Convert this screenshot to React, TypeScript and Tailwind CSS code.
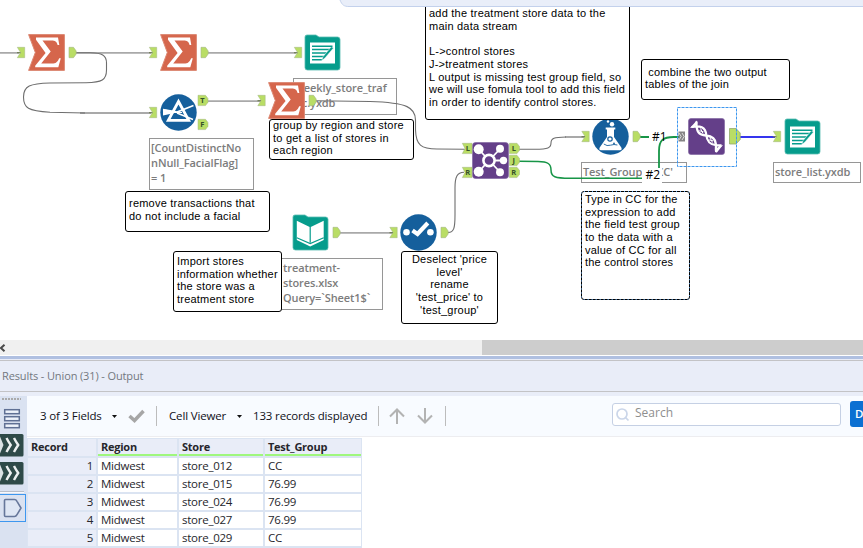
import type { ReactNode } from "react";

const NOTE_FONT = "font-['Liberation_Sans',Arial,sans-serif] text-[11px] leading-[12.65px] tracking-[0.22px] text-black";
const UI_FONT = "font-['Open_Sans','Noto_Sans',sans-serif]";

function Note({ className, lines }: { className: string; lines: string[] }) {
  return (
    <div className={`absolute whitespace-pre rounded-[3px] border border-black bg-white ${NOTE_FONT} ${className}`}>
      {lines.map((line, i) => (
        <div key={i} className="min-h-[12.65px]">{line}</div>
      ))}
    </div>
  );
}

function Caption({ className, lines }: { className: string; lines: string[] }) {
  return (
    <div className={`absolute whitespace-pre border border-[#969696] bg-white pl-px pt-px text-[11px] font-semibold leading-[15px] tracking-[-0.1px] text-[#7c7c7c] ${UI_FONT} ${className}`}>
      {lines.map((line) => (
        <div key={line}>{line}</div>
      ))}
    </div>
  );
}

function Tool({ className, children }: { className: string; children: ReactNode }) {
  return (
    <svg viewBox="0 0 37 37" className={`absolute size-[37px] ${className}`}>
      {children}
    </svg>
  );
}

function Summarize({ className }: { className: string }) {
  return (
    <Tool className={className}>
      <path d="M.6.6H36.4V36.4H.6L7.3 18.5Z" fill="#d5664c" stroke="#dc8873" strokeWidth="1" />
      <path
        d="M8 3.6H30L31.3 11H29.6C28.6 7.4 27.2 6.5 23.5 6.5H14.5L22.7 17.5L13.2 29.5H24C28 29.5 29.5 28 31.2 24.2H32.8L30.3 33.3H7.2V31.8L17.6 19L8 5.8Z"
        fill="#fff"
      />
    </Tool>
  );
}

function OutputData({ className }: { className: string }) {
  return (
    <Tool className={className}>
      <path d="M1 3Q1 1 3 1H12L15 3H33.5Q36 3 36 5.5V33.5Q36 36 33.5 36H3.5Q1 36 1 33.5Z" fill="#069c8c" stroke="#59bcb1" strokeWidth=".8" />
      <path d="M6 8.5H31V29.5H6Z" fill="#fff" />
      <path d="M8 12.2H28.5M8 15.6H26.5M8 19H24M8 22.4H20.5M8 25.8H18" stroke="#069c8c" strokeWidth="1.5" />
      <path d="M29.5 14L21 24L17.7 26.6L19 22.7L27 13" fill="#069c8c" stroke="#fff" strokeWidth=".5" />
    </Tool>
  );
}

function InputData({ className }: { className: string }) {
  return (
    <Tool className={className}>
      <path d="M1 3Q1 1 3 1H13L16 3H33.5Q36 3 36 5.5V33.5Q36 36 33.5 36H3.5Q1 36 1 33.5Z" fill="#069c8c" stroke="#59bcb1" strokeWidth=".8" />
      <path d="M4.8 6.7L18.2 13.2L31.7 6.7V26L18.2 32.4L4.8 26Z" fill="#fff" />
      <path d="M18.2 13V28.5M4.8 23.8L18.2 29.6L31.7 23.8" fill="none" stroke="#069c8c" strokeWidth="1.2" />
    </Tool>
  );
}

function Filter({ className }: { className: string }) {
  return (
    <Tool className={className}>
      <circle cx="18.5" cy="18.5" r="18.2" fill="#155f9c" />
      <path d="M3 15.5L17 18L33.5 11.5M17 19L33 25.5" fill="none" stroke="#fff" strokeWidth="1.7" />
      <path d="M3 15L18 18.3L3 21.5Z" fill="#fff" />
      <path d="M18.5 7.5L28.7 26.3H8.3Z" fill="none" stroke="#fff" strokeWidth="2.8" />
      <path d="M14 18.5H22" stroke="#fff" strokeWidth="1" />
    </Tool>
  );
}

function Select({ className }: { className: string }) {
  return (
    <Tool className={className}>
      <circle cx="18.5" cy="18.5" r="18.2" fill="#155f9c" />
      <circle cx="6.5" cy="18.3" r="3.3" fill="#fff" />
      <circle cx="30.4" cy="18.3" r="3.3" fill="#fff" />
      <path d="M12.5 16.5L17.5 20L27.8 9" fill="none" stroke="#fff" strokeWidth="4.1" />
    </Tool>
  );
}

function Join({ className }: { className: string }) {
  return (
    <Tool className={className}>
      <rect x=".5" y=".5" width="36" height="36" rx="3" fill="#643f89" stroke="#8469a2" strokeWidth=".7" />
      <path d="M6.5 7L17 18.5L28 7M6.5 30L17 18.5L28 30M17 18.5H31" stroke="#fff" strokeWidth="1.8" fill="none" />
      <circle cx="6.7" cy="7.3" r="5" fill="#fff" />
      <circle cx="6.7" cy="29.8" r="5" fill="#fff" />
      <circle cx="28" cy="6.8" r="4" fill="#fff" />
      <circle cx="28" cy="30.2" r="4" fill="#fff" />
      <circle cx="31.5" cy="18.5" r="3.7" fill="#fff" />
      <circle cx="17" cy="18.5" r="5.6" fill="#643f89" stroke="#fff" strokeWidth="2.6" />
    </Tool>
  );
}

function Formula({ className }: { className: string }) {
  return (
    <Tool className={className}>
      <circle cx="18.5" cy="18.5" r="18.2" fill="#155f9c" />
      <path d="M13.7 9.5H23.3V11.5H22V19L29.3 29.5Q30.5 32.3 28 32.3H9Q6.5 32.3 7.7 29.5L15 19V11.5H13.7Z" fill="#fff" />
      <circle cx="18" cy="21" r="2.2" fill="#fff" stroke="#155f9c" strokeWidth="1.2" />
      <circle cx="22" cy="25.5" r=".9" fill="#155f9c" />
      <path d="M11.8 26Q15 28.5 18.5 27.2T25.4 27" fill="none" stroke="#155f9c" strokeWidth=".9" />
      <circle cx="20" cy="6.2" r="2.2" fill="#fff" />
      <circle cx="16" cy="3.5" r="1.2" fill="#fff" />
    </Tool>
  );
}

function Union({ className }: { className: string }) {
  return (
    <Tool className={className}>
      <rect x=".5" y=".5" width="36" height="36" rx="2.5" fill="#643f89" stroke="#8469a2" strokeWidth=".7" />
      <path
        d="M8.5 3.5C8 14 11 17 18 17.500C24.500 18 27.500 20.500 28 26.500C28.200 29 27.500 31 28.200 34M3.500 9C12 7 17.500 9 18.300 17C19 24 22 26.500 28 27.200L33.500 27.500"
        fill="none"
        stroke="#fff"
        strokeWidth="2.3"
      />
      <path d="M11.300 12.700L15.500 13.800M12.500 10.500L15 15.500M20.500 21.800L25 22.800M21.800 19.500L24.500 24.500" stroke="#fff" strokeWidth="1" />
      <path d="M2 10L8.700 2.500L9.300 5.500L6 9.500ZM35 27L28.500 35L27.600 31.500L31 28Z" fill="#fff" />
    </Tool>
  );
}

const IN_ANCHORS = [
  [17, 47], [149, 47], [294, 47], [149, 107], [257.5, 95], [389.5, 227], [581.5, 131], [773, 131],
];
const OUT_ANCHORS = [
  [69, 47], [201, 47], [309, 95], [333, 227], [441, 227], [633, 131],
];

function Wires() {
  return (
    <svg viewBox="0 0 863 340" className="absolute inset-0 h-[340px] w-[863px]" fill="none">
      <g stroke="#a9a9a9" strokeWidth="1.8">
        <path d="M0 52.8H19M76 52.8H151M208 52.8H296M80 113H151M208 101.2H260M340 232.8H392M565 137H584" />
      </g>
      <g stroke="#6e6e6e" strokeWidth="1.1">
        <path d="M76 52.8H90C102 53 106.500 55 106.500 63V70C106.500 80 102 82.500 86 82.700L50 83C30 83.500 23.500 86 23.500 97C23.500 108 28 111 50 112.200L85 113" />
        <path d="M316 100.800L370 101.500C408 102.500 415.500 108 415.500 120V130C416 145 421 149 437 149L465 149.300" />
        <path d="M448 232.500C454 232.500 455 228 455 215V188C455 177 457 172.500 464 172.300" />
        <path d="M519 149.300H535C548 149 551 148 551 143C551 138 554 137.300 566 137" />
      </g>
      <g stroke="#179547" strokeWidth="1.5">
        <path d="M519 161.200L538 161.500C548 161.500 551 164 551 170C551 177 555 178.200 570 178.300H642" />
        <path d="M640 137H649M659 168V151C659 140 663 137 674 137H681" strokeWidth="1.8" />
      </g>
      <path d="M740 137H775" stroke="#3535ee" strokeWidth="2" />
    </svg>
  );
}

function Anchors() {
  return (
    <svg viewBox="0 0 863 340" className={`absolute inset-0 h-[340px] w-[863px] ${UI_FONT}`}>
      {IN_ANCHORS.map(([x, y]) => (
        <g key={`${x}-${y}`} transform={`translate(${x} ${y})`}>
          <path d="M.3.3H7.7V10.700H.3L3.500 5.500Z" fill="#b9dd65" stroke="#a2b584" strokeWidth=".5" />
          <path d="M0 5.700H3.500" stroke="#6f7c55" strokeWidth="1.200" />
        </g>
      ))}
      {OUT_ANCHORS.map(([x, y]) => (
        <path key={`${x}-${y}`} transform={`translate(${x} ${y})`} d="M0 .3H4.500L7.200 4V7L4.500 10.700H0Z" fill="#b9dd65" stroke="#a2b584" strokeWidth=".6" />
      ))}
      <path d="M729.500 128.500H736L740.200 133V139.500L736 144H729.500Z" fill="#b9dd65" stroke="#94a970" strokeWidth=".8" />
      {[[198, 95, "T"], [198, 119, "F"], [509.5, 143, "L"], [509.5, 155, "J"], [509.5, 167, "R"]].map(([x, y, t]) => (
        <g key={`${x}-${y}`} transform={`translate(${x} ${y})`}>
          <path d="M0 .3H7.500L10 3.500V7.300L7.500 10.600H0Z" fill="#b9dd65" stroke="#a2b584" strokeWidth=".5" />
          <text x="4.300" y="8.200" textAnchor="middle" fontSize="7.500" fontWeight="700" fill="#35512a">{t}</text>
        </g>
      ))}
      {[[462, 143, "L"], [462, 167, "R"]].map(([x, y, t]) => (
        <g key={`${x}-${y}`} transform={`translate(${x} ${y})`}>
          <path d="M.3.3H10V10.600H.3L3 5.500Z" fill="#b9dd65" stroke="#a2b584" strokeWidth=".5" />
          <text x="5.800" y="8.200" textAnchor="middle" fontSize="7.500" fontWeight="700" fill="#35512a">{t}</text>
        </g>
      ))}
      <path d="M678.500 131.500H685V141.500H678.500Z" fill="#858585" />
      <path d="M679 133L681.200 136.500L679 140M682 133L684.200 136.500L682 140" stroke="#e5e5e5" strokeWidth=".9" fill="none" />
    </svg>
  );
}

function Workflow() {
  return (
    <section className="relative h-[340px] w-full shrink-0 overflow-hidden bg-white">
      <Caption className="left-[293px] top-[78px] h-[37px] w-[104px]" lines={["weekly_store_traf", "fic.yxdb"]} />
      <Caption className="left-[149px] top-[138px] h-[52px] w-[105px]" lines={["[CountDistinctNo", "nNull_FacialFlag]", "= 1"]} />
      <Caption className="left-[281px] top-[258px] h-[52px] w-[102px]" lines={["treatment-", "stores.xlsx", "Query=`Sheet1$`"]} />
      <Caption className="left-[581px] top-[162px] h-[21px] w-[106px]" lines={["Test_Group = 'CC'"]} />
      <Caption className="left-[773px] top-[162px] h-[21px] w-[88px]" lines={["store_list.yxdb"]} />
      <Wires />

      <Summarize className="left-[28px] top-[34px]" />
      <Summarize className="left-[160px] top-[34px]" />
      <Summarize className="left-[268px] top-[82px]" />
      <Filter className="left-[160px] top-[94px]" />
      <OutputData className="left-[304px] top-[34px]" />
      <InputData className="left-[292px] top-[214px]" />
      <Select className="left-[400px] top-[214px]" />
      <Join className="left-[472px] top-[142px]" />
      <Formula className="left-[592px] top-[118px]" />
      <Union className="left-[688px] top-[118px]" />
      <OutputData className="left-[784px] top-[118px]" />
      <Anchors />

      <div className={`absolute left-[642px] top-[168px] h-[17px] w-5 bg-white pl-[3.5px] text-[12px] leading-[14px] text-black ${UI_FONT}`}>#2</div>
      <div className={`absolute left-[652px] top-[129px] text-[12px] leading-[15px] text-black ${UI_FONT}`}>#1</div>

      <svg className="absolute left-[677px] top-[107px] h-[60px] w-[61px]">
        <rect x=".5" y=".5" width="59" height="59" fill="none" stroke="#3d97ef" strokeDasharray="3 1" />
      </svg>

      <Note className="left-[269px] top-[119px] h-[41px] w-[145px] pl-[3px] [&>:first-child]:-mt-px" lines={["group by region and store", "to get a list of stores in", "each region"]} />
      <Note className="left-[125px] top-[191px] h-[41px] w-[145px] pl-[3px] pt-[5px]" lines={["remove transactions that", "do not include a facial"]} />
      <Note className="left-[173px] top-[251px] h-[61px] w-[109px] pl-[3px] pt-[3px]" lines={["Import stores", "information whether", "the store was a", "treatment store"]} />
      <Note className="left-[401px] top-[251px] h-[73px] w-[97px] pt-px text-center" lines={["Deselect 'price", "level'", "rename", "'test_price' to", "'test_group'"]} />
      <Note
        className="left-[425px] top-[4px] h-[116px] w-[205px] pl-[3px] pt-[2.3px]"
        lines={["add the treatment store data to the", "main data stream", "", "L->control stores", "J->treatment stores", "L output is missing test group field, so", "we will use fomula tool to add this field", "in order to identify control stores."]}
      />
      <Note className="left-[641px] top-[59px] h-[41px] w-[149px] pl-[3px] pt-[5.5px]" lines={[" combine the two output", "tables of the join"]} />
      <Note
        className="left-[581px] top-[191px] h-[109px] w-[109px] pl-[3px] pt-px"
        lines={["Type in CC for the", "expression to add", "the field test group", "to the data with a", "value of CC for all", "the control stores"]}
      />
      <svg className="absolute left-[581px] top-[191px] h-[109px] w-[109px]">
        <rect x=".5" y=".5" width="108" height="108" rx="2.500" fill="none" stroke="#5fa3e8" strokeDasharray="1 3" />
      </svg>

      <svg className="absolute left-[338px] top-0 h-[7px] w-[525px]">
        <path d="M0 0H525V6.500H11C6 6.500 4 4 2 0Z" fill="#e9eef9" />
        <path d="M2 0C4 5 6 6.500 11 6.500H525" fill="none" stroke="#c3d1ec" />
      </svg>
    </section>
  );
}

function ScrollBar() {
  return (
    <div className="flex h-[15px] shrink-0 bg-[#f0f0f0]">
      <div className="flex w-[482px] items-center">
        <svg viewBox="0 0 6 8" className="h-2 w-1.5">
          <path d="M4.500 .8L1 4L4.500 7.200" fill="none" stroke="#4a4a4a" strokeWidth="2" />
        </svg>
      </div>
      <div className="flex-1 bg-[#cdcdcd]" />
    </div>
  );
}

function SideRail() {
  return (
    <aside className="flex w-[27px] shrink-0 flex-col bg-[#dae2f1]">
      <svg viewBox="0 0 27 152" className="h-[152px] w-[27px]" fill="none">
        <path d="M2 3H21" stroke="#aaa" strokeWidth="2" strokeDasharray="2 1" />
        <g stroke="#5f7094" strokeWidth="1.500" fill="#edf2fa">
          <rect x="4.700" y="13.700" width="14.600" height="4" />
          <rect x="4.700" y="20.700" width="14.600" height="4" />
          <rect x="4.700" y="27.700" width="14.600" height="4" />
        </g>
        {[38, 66].map((y) => (
          <g key={y} transform={`translate(0 ${y})`}>
            <path d="M0 0H22Q23.500 0 23.500 1.500V21Q23.500 22.500 22 22.500H0Z" fill="#2e4a48" />
            <path d="M0 2.500L3.500 11L0 19.500Z" fill="#dce3e5" />
            <path d="M6.500 4Q8 7 10.700 11Q8 15 6.500 18M14 4Q15.500 7 18.200 11Q15.500 15 14 18" stroke="#edf1f1" strokeWidth="2.400" />
          </g>
        ))}
        <path d="M0 95.500H24" stroke="#b8bec9" />
        <path d="M0 96.500H24" stroke="#f7f9fd" />
        <rect x="-.5" y="98.500" width="26" height="27" stroke="#3d97ef" />
        <g transform="translate(0 2)">
          <path d="M4.500 102.500Q4.500 101.500 5.500 101.500H14.500Q16 101.500 17 103.300L21 110L17 116.700Q16 118.500 14.500 118.500H5.500Q4.500 118.500 4.500 117.500Z" fill="#dfe7f4" stroke="#66779a" strokeWidth="1.600" />
        </g>
      </svg>
    </aside>
  );
}

function Caret() {
  return (
    <svg viewBox="0 0 5 3" className="h-[3px] w-[5px]">
      <path d="M0 0H5L2.500 3Z" fill="#111" />
    </svg>
  );
}

function Toolbar() {
  return (
    <div className="flex h-[41px] shrink-0 items-center overflow-hidden border-b border-[#ededf0] bg-[#f8fbff] text-[11.5px] tracking-[-0.15px] text-[#101018] [&>*]:shrink-0">
      <span className="ml-[13px] w-[72px] whitespace-nowrap">3 of 3 Fields</span>
      <Caret />
      <svg viewBox="0 0 17 14" className="ml-[11px] h-3.5 w-[17px]">
        <path d="M1.500 7L6.500 11.500L15.500 2" fill="none" stroke="#a6a6a6" strokeWidth="3.500" />
      </svg>
      <div className="ml-[11px] h-5 w-px bg-[#bcbcbc]" />
      <span className="ml-3 w-[68px] whitespace-nowrap">Cell Viewer</span>
      <Caret />
      <span className="ml-[11px] w-[125px] whitespace-nowrap">133 records displayed</span>
      <div className="h-5 w-px bg-[#bcbcbc]" />
      <svg viewBox="0 0 44 16" className="ml-2.5 h-4 w-11" fill="none" stroke="#b3b3b3" strokeWidth="2">
        <path d="M8 16V1.500M1 8.500L8 1.500L15 8.500M36 0V14.500M29 7.500L36 14.500L43 7.500" />
      </svg>
      <div className="ml-3 h-5 w-px bg-[#bcbcbc]" />
      <div className="mb-1 ml-[166px] flex h-[23px] w-[229px] items-center rounded-[3px] border border-[#c5d0e4] bg-white">
        <svg viewBox="0 0 14 14" className="ml-[3px] mt-0.5 size-3.5" fill="none" stroke="#cbd6e9" strokeWidth="1.700">
          <circle cx="6" cy="6" r="5" />
          <path d="M9.500 9.500L12.500 12.500" />
        </svg>
        <span className="mb-[3px] ml-[5px] text-[12px] tracking-normal text-[#8e8e8e]">Search</span>
      </div>
      <div className="mb-1 ml-[9px] flex h-[26px] w-[30px] items-center rounded-[3px] bg-[#0b70d2] pl-[5px] font-semibold text-white">Data</div>
    </div>
  );
}

const ROWS = [
  ["1", "Midwest", "store_012", "CC"],
  ["2", "Midwest", "store_015", "76.99"],
  ["3", "Midwest", "store_024", "76.99"],
  ["4", "Midwest", "store_027", "76.99"],
  ["5", "Midwest", "store_029", "CC"],
];
const COLS = "grid grid-cols-[68px_79px_84px_96px] gap-x-[2px]";

function ResultsTable() {
  return (
    <div className="flex w-[335px] flex-col gap-y-[2px] bg-[#dbe4f2] pb-[2px] pl-px pr-px pt-px text-[11.5px] tracking-[-0.25px] text-[#26262c]">
      <div className={`${COLS} h-[17px] text-[11px] font-bold leading-[15px]`}>
        <div className="bg-[#e9edf8] pl-[3px]">Record</div>
        {["Region", "Store", "Test_Group"].map((name) => (
          <div key={name} className="border-b-2 border-[#9ff77d] bg-[#e9edf8] pl-[3px]">{name}</div>
        ))}
      </div>
      {ROWS.map(([id, region, store, group]) => (
        <div key={id} className={`${COLS} h-4 leading-[16px]`}>
          <div className="bg-[#e9edf8] pr-[3px] text-right">{id}</div>
          <div className="bg-white pl-[3px]">{region}</div>
          <div className="bg-white pl-[3px]">{store}</div>
          <div className="bg-white pl-[3px]">{group}</div>
        </div>
      ))}
    </div>
  );
}

export default function App() {
  return (
    <main className={`flex h-[548px] w-[863px] flex-col overflow-hidden bg-white ${UI_FONT}`}>
      <Workflow />
      <ScrollBar />
      <div className="mt-px h-[3px] shrink-0 bg-[#b0c0e1]" />
      <div className="h-px shrink-0 bg-[#e9ecf7]" />
      <header className="flex h-8 shrink-0 items-center border-y border-[#c3c3c6] bg-[#e9edf8] pl-[2px] text-[11px] tracking-[-0.12px] text-[#737880]">
        Results - Union (31) - Output
      </header>
      <div className="h-1 shrink-0 bg-[#e9edf8]" />
      <div className="flex min-h-0 flex-1">
        <SideRail />
        <div className="flex min-w-0 flex-1 flex-col gap-px">
          <Toolbar />
          <ResultsTable />
        </div>
      </div>
    </main>
  );
}
